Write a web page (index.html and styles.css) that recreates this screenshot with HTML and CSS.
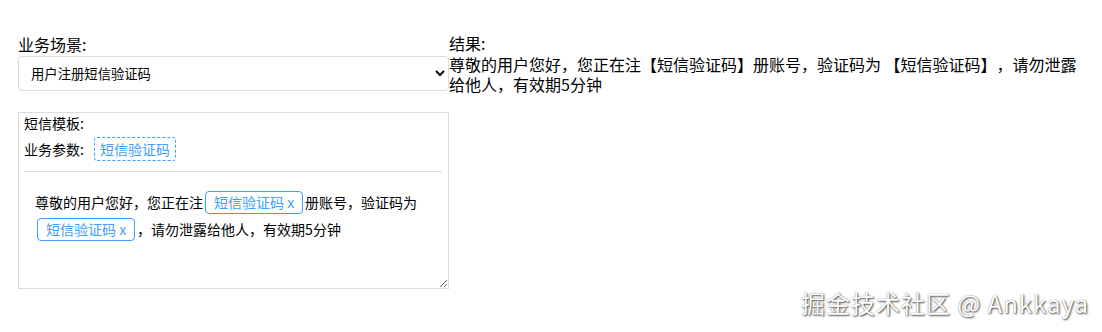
FILE: index.html
```html
<!DOCTYPE html>
<html lang="zh-CN">
<head>
<meta charset="utf-8">
<title>短信模板</title>
<link rel="stylesheet" href="styles.css">
</head>
<body>
<div class="page">
  <div class="left">
    <div class="label">业务场景:</div>
    <select class="scene">
      <option>用户注册短信验证码</option>
    </select>
    <div class="tpl-box">
      <div class="tpl-title">短信模板:</div>
      <div class="params">业务参数: <span class="param">短信验证码</span></div>
      <div class="divider"></div>
      <div class="editor">尊敬的用户您好，您正在注<span class="tag">短信验证码 x</span>册账号，验证码为 <span class="tag">短信验证码 x</span>，请勿泄露给他人，有效期5分钟</div>
    </div>
  </div>
  <div class="right">
    <div class="label label-result">结果:</div>
    <div class="result">尊敬的用户您好，您正在注【短信验证码】册账号，验证码为 【短信验证码】，请勿泄露给他人，有效期5分钟</div>
  </div>
</div>
<div class="watermark">掘金技术社区 @ Ankkaya</div>
</body>
</html>
```
FILE: styles.css
```css
* { box-sizing: border-box; }
html, body { margin: 0; padding: 0; background: #fff; }
body {
  font-family: "Noto Sans CJK SC", "Noto Sans", sans-serif;
  color: #000;
  width: 1102px;
  height: 332px;
  position: relative;
  overflow: hidden;
  text-spacing-trim: space-all;
}
.page {
  display: flex;
  padding: 33px 10px 0 18px;
}
.left {
  width: 431px;
  flex: none;
}
.right {
  flex: 1;
}
.label {
  font-size: 16px;
  line-height: 22px;
  height: 23px;
}
.label-result {
  line-height: 20px;
  height: 21px;
}
.scene {
  display: block;
  width: 431px;
  height: 35px;
  border: 1px solid #dcdcdc;
  border-radius: 4px;
  background: #fff;
  font-family: "Noto Sans CJK SC", sans-serif;
  font-size: 13.33px;
  color: #000;
  padding: 0 8px;
}
.tpl-box {
  margin-top: 21px;
  width: 431px;
  height: 177px;
  border: 1px solid #dcdcdc;
  padding: 0 6px 0 5px;
  resize: both;
  overflow: auto;
  font-size: 14px;
}
.tpl-title {
  line-height: 20px;
}
.params {
  margin-top: 4px;
  line-height: 24px;
  display: flex;
  align-items: center;
}
.param {
  display: inline-block;
  margin-left: 10px;
  border: 1px dashed #409eff;
  border-radius: 3px;
  color: #409eff;
  padding: 0 5px;
  line-height: 22px;
}
.divider {
  margin-top: 10px;
  border-top: 1px solid #dcdcdc;
}
.editor {
  padding: 17px 6px 0 11px;
  line-height: 27px;
  font-size: 14px;
}
.tag {
  display: inline-block;
  border: 1px solid #409eff;
  border-radius: 4px;
  color: #409eff;
  padding: 0 8px;
  line-height: 21px;
  margin: 0 2px;
  font-size: 14px;
}
.result {
  font-size: 16px;
  line-height: 20px;
}
.watermark {
  position: absolute;
  right: 13px;
  bottom: 14px;
  font-size: 24px;
  line-height: 30px;
  letter-spacing: 1px;
  color: #fff;
  text-shadow: 1px 1px 2px rgba(0,0,0,0.7), 0 0 1px rgba(0,0,0,0.5);
  font-family: "Noto Sans CJK SC", "Noto Sans", sans-serif;
}
```
